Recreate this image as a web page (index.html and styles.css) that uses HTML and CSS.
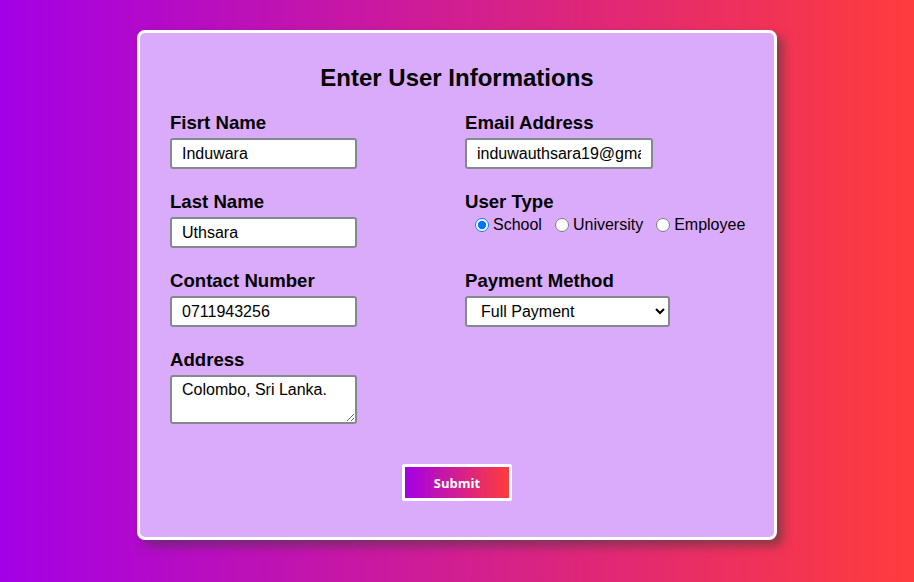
FILE: index.html
```html
<!DOCTYPE html>
<html>
<head>
<meta charset="utf-8">
<link rel="stylesheet" href="styles.css">
</head>
<body>
<form class="card">
  <h2 class="title">Enter User Informations</h2>
  <div class="grid">
    <div class="field">
      <label class="lbl">Fisrt Name</label>
      <input class="inp" type="text" value="Induwara">
    </div>
    <div class="field">
      <label class="lbl">Email Address</label>
      <input class="inp email" type="text" value="induwauthsara19@gmail.com">
    </div>
    <div class="field">
      <label class="lbl">Last Name</label>
      <input class="inp" type="text" value="Uthsara">
    </div>
    <div class="field">
      <label class="lbl">User Type</label>
      <div class="radios">
        <label class="opt"><input type="radio" name="t" checked>School</label>
        <label class="opt"><input type="radio" name="t">University</label>
        <label class="opt"><input type="radio" name="t">Employee</label>
      </div>
    </div>
    <div class="field">
      <label class="lbl">Contact Number</label>
      <input class="inp" type="text" value="0711943256">
    </div>
    <div class="field">
      <label class="lbl">Payment Method</label>
      <select class="sel"><option>Full Payment</option><option>Installments</option></select>
    </div>
    <div class="field">
      <label class="lbl">Address</label>
      <textarea class="ta">Colombo, Sri Lanka.</textarea>
    </div>
  </div>
  <div class="actions">
    <button type="button" class="btn">Submit</button>
  </div>
</form>
</body>
</html>
```
FILE: styles.css
```css
html, body {
  margin: 0;
  padding: 0;
}
body {
  width: 914px;
  height: 582px;
  overflow: hidden;
  background: linear-gradient(to right, #a400e6, #ff3c3c);
  font-family: "Liberation Sans", Arial, sans-serif;
  padding-top: 30px;
  box-sizing: border-box;
}
.card {
  box-sizing: border-box;
  width: 640px;
  height: 510px;
  margin-left: 137px;
  background: #dbabfb;
  border: 3px solid #fff;
  border-radius: 8px;
  box-shadow: 6px 6px 10px rgba(60, 60, 60, 0.55);
  padding: 32px 30px 0 30px;
}
.title {
  margin: 0 0 21px 0;
  font-size: 24px;
  line-height: 26px;
  text-align: center;
  font-weight: bold;
  color: #000;
}
.grid {
  display: grid;
  grid-template-columns: 295px 1fr;
  row-gap: 22px;
}
.field {
  display: flex;
  flex-direction: column;
  align-items: flex-start;
}
.lbl {
  font-size: 18.6px;
  line-height: 21px;
  font-weight: bold;
  color: #000;
  margin-bottom: 5px;
}
.inp, .ta, .sel {
  box-sizing: border-box;
  font-family: "Liberation Sans", Arial, sans-serif;
  font-size: 16px;
  color: #000;
  background: #fff;
  border: 2px solid #818b8e;
  border-radius: 3px;
  outline: none;
}
.inp {
  width: 187px;
  height: 31px;
  padding: 0 10px;
}
.email {
  width: 188px;
}
.ta {
  width: 187px;
  height: 49px;
  padding: 4px 10px;
  resize: both;
}
.sel {
  width: 205px;
  height: 31px;
  padding: 0 10px;
}
.radios {
  display: flex;
  align-items: center;
  padding-left: 10px;
  margin-top: -2px;
  gap: 13px;
  font-size: 16px;
  line-height: 20px;
}
.opt {
  display: flex;
  align-items: center;
  color: #000;
}
.opt input {
  margin: 0 4px 0 0;
  width: 14px;
  height: 14px;
}
.actions {
  display: flex;
  justify-content: center;
  margin-top: 40px;
}
.btn {
  box-sizing: border-box;
  width: 110px;
  height: 37px;
  border: 3px solid #fff;
  border-radius: 2px;
  background: linear-gradient(to right, #a400e6, #ff3c3c);
  color: #fff;
  font-family: "Open Sans", sans-serif;
  font-weight: bold;
  font-size: 13px;
  cursor: pointer;
}
```
